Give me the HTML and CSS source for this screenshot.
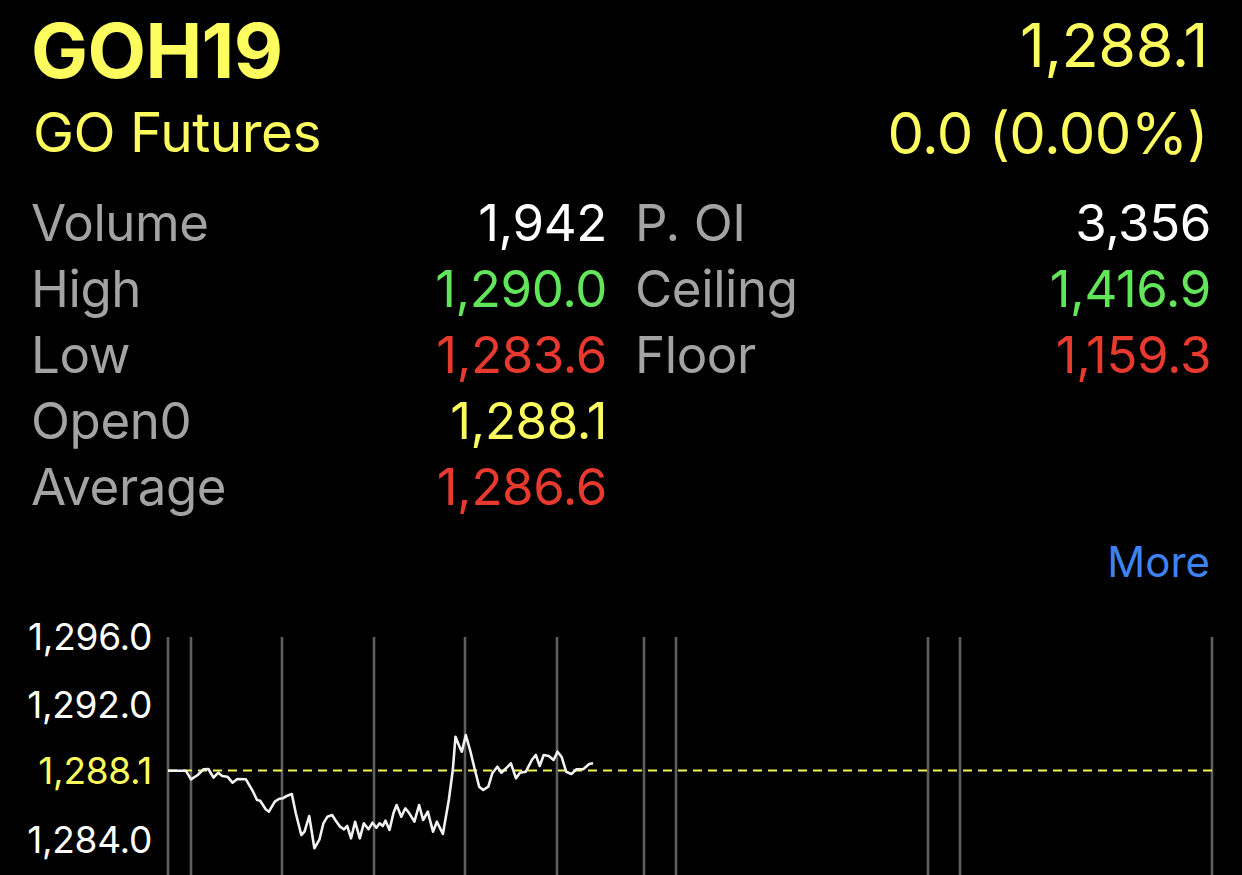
FILE: index.html
```html
<!DOCTYPE html>
<html lang="en">
<head>
<meta charset="utf-8">
<title>GOH19</title>
<link rel="stylesheet" href="styles.css">
</head>
<body>
<div class="screen">
  <header class="header">
    <div class="head-left">
      <div class="symbol">GOH19</div>
      <div class="name">GO Futures</div>
    </div>
    <div class="head-right">
      <div class="price yellow">1,288.1</div>
      <div class="change yellow">0.0 (0.00%)</div>
    </div>
  </header>

  <section class="stats">
    <div class="stat-col">
      <div class="stat"><span class="label">Volume</span><span class="value white">1,942</span></div>
      <div class="stat"><span class="label">High</span><span class="value green">1,290.0</span></div>
      <div class="stat"><span class="label">Low</span><span class="value red">1,283.6</span></div>
      <div class="stat"><span class="label">Open0</span><span class="value yellow">1,288.1</span></div>
      <div class="stat"><span class="label">Average</span><span class="value red">1,286.6</span></div>
    </div>
    <div class="stat-col">
      <div class="stat"><span class="label">P. OI</span><span class="value white">3,356</span></div>
      <div class="stat"><span class="label">Ceiling</span><span class="value green">1,416.9</span></div>
      <div class="stat"><span class="label">Floor</span><span class="value red">1,159.3</span></div>
    </div>
  </section>

  <div class="more-row"><a class="more">More</a></div>

  <section class="chart">
    <div class="axis">
      <span class="tick" style="top:37px">1,296.0</span>
      <span class="tick" style="top:104.6px">1,292.0</span>
      <span class="tick yellow" style="top:170.5px">1,288.1</span>
      <span class="tick" style="top:239.8px">1,284.0</span>
    </div>
    <svg class="plot" width="1082" height="300" viewBox="0 0 1082 300">
      <g class="grid">
        <line x1="8" y1="37" x2="8" y2="300"/>
        <line x1="31" y1="37" x2="31" y2="300"/>
        <line x1="122" y1="37" x2="122" y2="300"/>
        <line x1="214" y1="37" x2="214" y2="300"/>
        <line x1="305" y1="37" x2="305" y2="300"/>
        <line x1="397" y1="37" x2="397" y2="300"/>
        <line x1="484" y1="37" x2="484" y2="300"/>
        <line x1="516" y1="37" x2="516" y2="300"/>
        <line x1="768" y1="37" x2="768" y2="300"/>
        <line x1="800" y1="37" x2="800" y2="300"/>
        <line x1="1052" y1="37" x2="1052" y2="300"/>
      </g>
      <line class="ref" x1="8" y1="170.5" x2="1052" y2="170.5"/>
      <polyline class="series" points="8,170.7 25.8,170.7 31,179.3 37.7,175 43.6,169.3 48.4,169 53.5,177.7 58.3,172.7 62.2,176 67.4,176.7 72.5,182.7 77.3,179 85.9,179.3 93.1,191.7 97,200 100.2,200.7 105.7,209.3 108.9,211.7 114.8,201.7 118.8,199 122.7,198.3 126.7,196 131.8,194 135.8,213.3 141.3,235 144.5,231.7 149.2,216 154.4,248.3 159.5,239.3 163.4,223.3 167.4,216.7 172.1,215 175.3,220 180.1,226.7 184,229.3 187.2,226 191.1,238.3 195.1,221.7 199.8,238.3 203.8,223.3 208.5,229.3 212.5,222.7 216.4,227.7 219.6,223.3 222.8,226 225.5,220.7 229.5,230 233.4,213.3 236.6,205 241.3,216.7 245.3,208.3 249.3,213.3 254.4,221.7 259.1,205 263.1,220 267.8,211.7 273,231.7 276.9,221.7 282.9,234 288.8,200 292.8,170 295.5,136.7 299.5,146.7 301.8,151.7 305.8,135 310.5,151.7 314.5,168.3 319.2,186.7 323.2,190 328.3,186.7 332.3,173.3 337.4,166.7 341.4,172.7 346.1,168.3 350.9,163.3 356,178.3 360,172.7 365.9,171.7 371.8,160 375.8,155 379.7,166 383.7,155 388.8,156 393.6,160 397.5,151.7 401.5,156.7 406.2,171.7 411.4,174 416.5,169.3 423.2,169.3 429.2,164 433.1,163.3"/>
    </svg>
  </section>
</div>
</body>
</html>
```

FILE: styles.css
```css
* { box-sizing: border-box; }

html, body {
  margin: 0;
  padding: 0;
  background: #000;
}

body {
  width: 1242px;
  height: 875px;
  overflow: hidden;
  font-family: Inter, "Noto Sans", "Liberation Sans", sans-serif;
  color: #fff;
}

.screen {
  display: flex;
  flex-direction: column;
}

.yellow { color: #fdfc5f; }
.green { color: #62e659; }
.red { color: #e8392e; }
.white { color: #fff; }

.header {
  display: flex;
  justify-content: space-between;
  align-items: flex-start;
  padding: 0 34px 0 31px;
  height: 174px;
}

.head-left {
  padding-top: 10px;
  display: flex;
  flex-direction: column;
}

.symbol {
  font-size: 76px;
  font-weight: 700;
  line-height: 80px;
  color: #fdfc5f;
  letter-spacing: -0.6px;
}

.name {
  font-size: 55px;
  line-height: 84px;
  color: #fdfc5f;
  letter-spacing: -0.5px;
  padding-left: 2px;
}

.head-right {
  padding-top: 5px;
  display: flex;
  flex-direction: column;
  align-items: flex-end;
}

.price {
  font-size: 61px;
  line-height: 80px;
  letter-spacing: -0.4px;
}

.change {
  margin-top: 8px;
  font-size: 58px;
  line-height: 80px;
  letter-spacing: -0.5px;
}

.stats {
  margin-top: 16px;
  padding: 0 31px 0 31px;
  display: grid;
  grid-template-columns: 1fr 1fr;
  column-gap: 28px;
  align-items: start;
}

.stat-col {
  display: flex;
  flex-direction: column;
}

.stat {
  display: flex;
  justify-content: space-between;
  font-size: 51px;
  line-height: 66px;
  letter-spacing: -0.4px;
}

.label { color: #a3a3a3; }

.more-row {
  margin-top: 17px;
  padding: 0 32px;
  display: flex;
  justify-content: flex-end;
}

.more {
  font-size: 42px;
  line-height: 50px;
  color: #3f83f2;
}

.chart {
  margin-top: 13px;
  display: flex;
  height: 300px;
}

.axis {
  position: relative;
  width: 160px;
  flex: none;
}

.tick {
  position: absolute;
  right: 8px;
  transform: translateY(-50%);
  font-size: 37px;
  line-height: 40px;
  color: #fff;
  letter-spacing: -0.3px;
}

.tick.yellow { color: #fdfc5f; }

.plot {
  flex: none;
  display: block;
}

.grid line {
  stroke: #5e5e5e;
  stroke-width: 2.6;
}

.ref {
  stroke: #f4f25a;
  stroke-width: 2;
  stroke-dasharray: 9 6;
}

.series {
  fill: none;
  stroke: #f2f2f2;
  stroke-width: 2.6;
  stroke-linejoin: round;
}
```
